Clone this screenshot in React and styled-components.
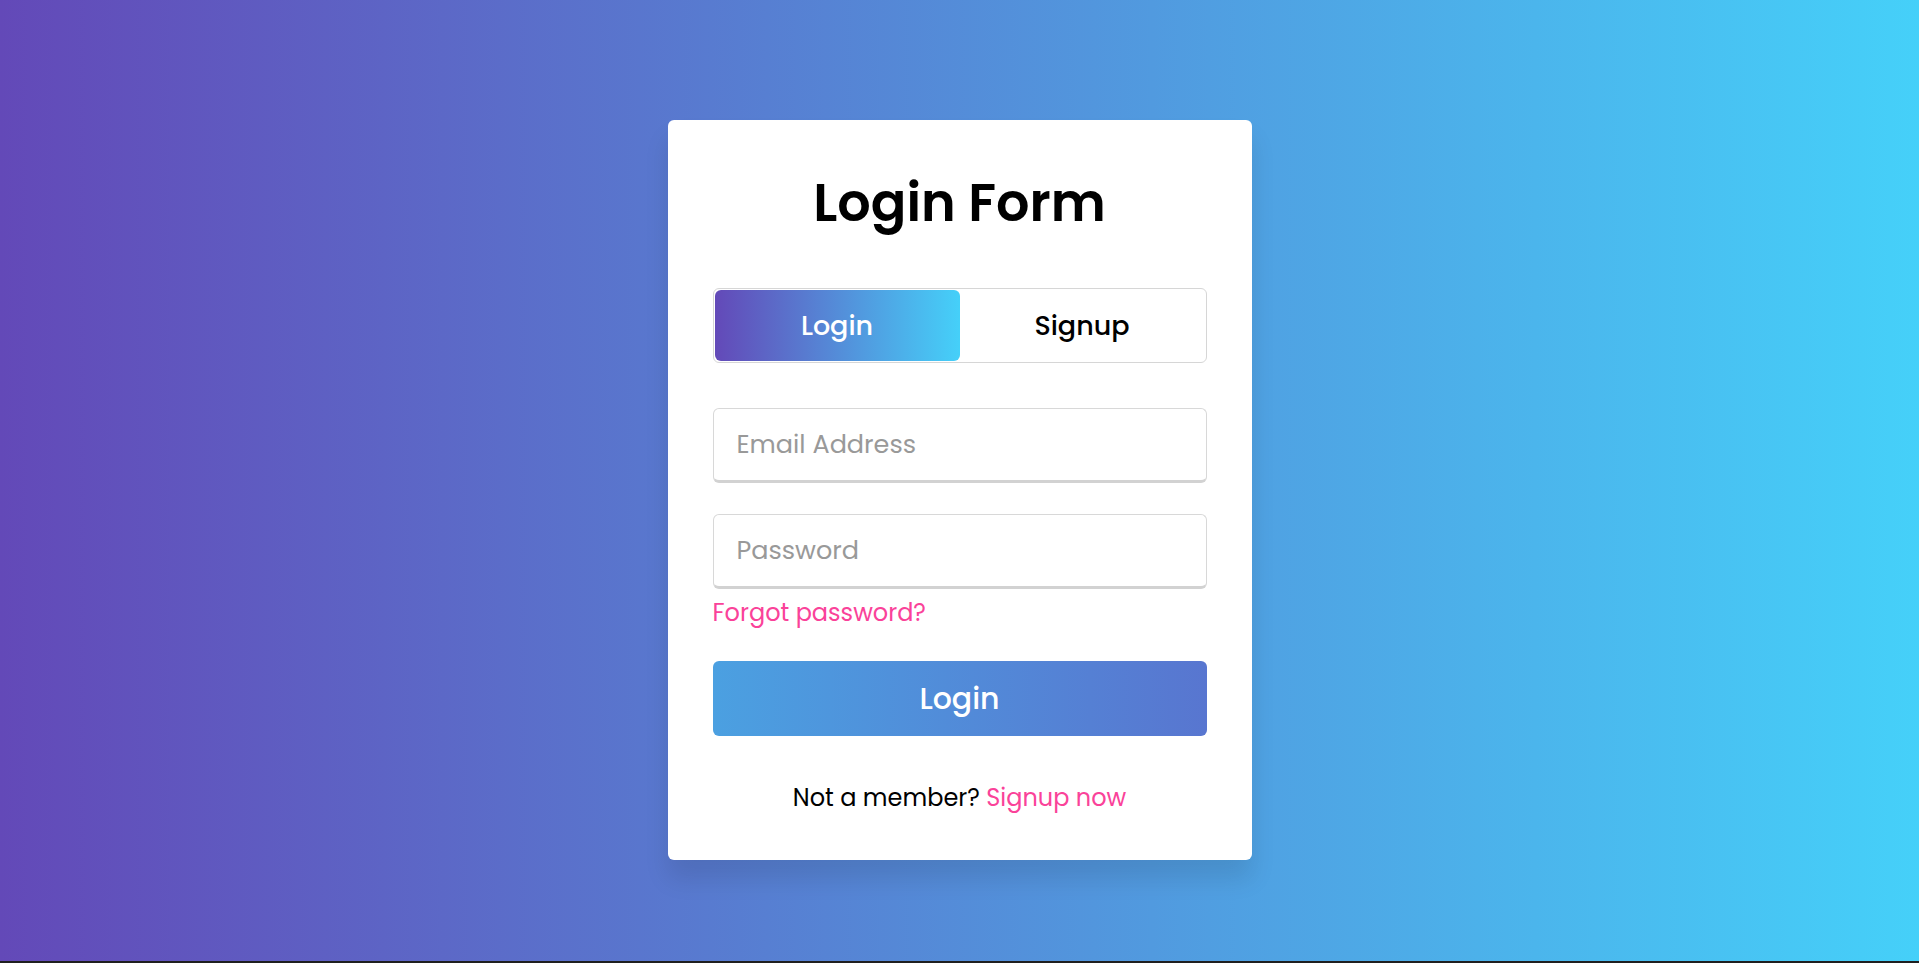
import React, { useState } from 'react';
import styled, { createGlobalStyle } from 'styled-components';

const GlobalStyle = createGlobalStyle`
  * {
    box-sizing: border-box;
  }
  html {
    background: #1f1f1f;
  }
  body {
    margin: 0;
    font-family: "Poppins", Inter, "Noto Sans", sans-serif;
  }
`;

const Page = styled.div`
  min-height: calc(100vh - 2px);
  display: flex;
  justify-content: center;
  align-items: flex-start;
  padding-top: 120px;
  background: linear-gradient(to right, #6349b8, #45d0f9);
`;

const Card = styled.div`
  width: 584px;
  padding: 50px 45px 47px;
  background: #ffffff;
  border-radius: 6px;
  box-shadow: 0 19px 25px rgba(0, 0, 0, 0.1);
`;

const Title = styled.h1`
  margin: 0;
  height: 66px;
  line-height: 66px;
  text-align: center;
  font-size: 52.5px;
  font-weight: 600;
  color: #000;
`;

const Tabs = styled.div`
  position: relative;
  display: flex;
  height: 75px;
  margin-top: 52px;
  padding: 1px;
  border: 1px solid #d6d6d6;
  border-radius: 6px;
`;

const SliderTab = styled.div`
  position: absolute;
  top: 1px;
  bottom: 1px;
  left: ${(p) => (p.$right ? '50%' : '1px')};
  width: calc(50% - 1px);
  border-radius: 6px;
  background: linear-gradient(to right, #6349b8, #45d0f9);
`;

const TabLabel = styled.button`
  position: relative;
  z-index: 1;
  flex: 1;
  border: none;
  background: transparent;
  font-family: inherit;
  font-size: 27px;
  font-weight: 500;
  color: ${(p) => (p.$active ? '#fff' : '#000')};
  cursor: pointer;
`;

const Field = styled.input`
  display: block;
  width: 100%;
  height: 75px;
  margin-top: ${(p) => p.$gap}px;
  padding: 0 23px;
  border: 1px solid #d8d8d8;
  border-bottom: 3px solid #d2d2d2;
  border-radius: 6px;
  outline: none;
  font-family: inherit;
  font-size: 25.5px;
  color: #000;

  &::placeholder {
    color: #999;
  }
`;

const PassLink = styled.a`
  display: block;
  margin-top: 9px;
  height: 30px;
  line-height: 30px;
  font-size: 24px;
  color: #fa4299;
  text-decoration: none;
  cursor: pointer;
`;

const SubmitButton = styled.button`
  display: block;
  width: 100%;
  height: 75px;
  margin-top: 33px;
  border: none;
  border-radius: 6px;
  background: linear-gradient(to right, #4ba0e1, #5876d0);
  font-family: inherit;
  font-size: 30px;
  font-weight: 500;
  color: #fff;
  cursor: pointer;
`;

const SignupLine = styled.div`
  margin-top: 47px;
  height: 30px;
  line-height: 30px;
  text-align: center;
  font-size: 24px;
  color: #000;

  a {
    color: #fa4299;
    text-decoration: none;
    cursor: pointer;
  }
`;

const App = () => {
  const [mode, setMode] = useState('login');

  return (
    <>
      <GlobalStyle />
      <Page>
        <Card>
          <Title>Login Form</Title>
          <Tabs>
            <SliderTab $right={mode === 'signup'} />
            <TabLabel $active={mode === 'login'} onClick={() => setMode('login')}>
              Login
            </TabLabel>
            <TabLabel $active={mode === 'signup'} onClick={() => setMode('signup')}>
              Signup
            </TabLabel>
          </Tabs>
          <form onSubmit={(e) => e.preventDefault()}>
            <Field $gap={45} type="text" placeholder="Email Address" />
            <Field $gap={31} type="password" placeholder="Password" />
            <PassLink>Forgot password?</PassLink>
            <SubmitButton type="submit">Login</SubmitButton>
            <SignupLine>
              Not a member? <a onClick={() => setMode('signup')}>Signup now</a>
            </SignupLine>
          </form>
        </Card>
      </Page>
    </>
  );
};

export default App;
